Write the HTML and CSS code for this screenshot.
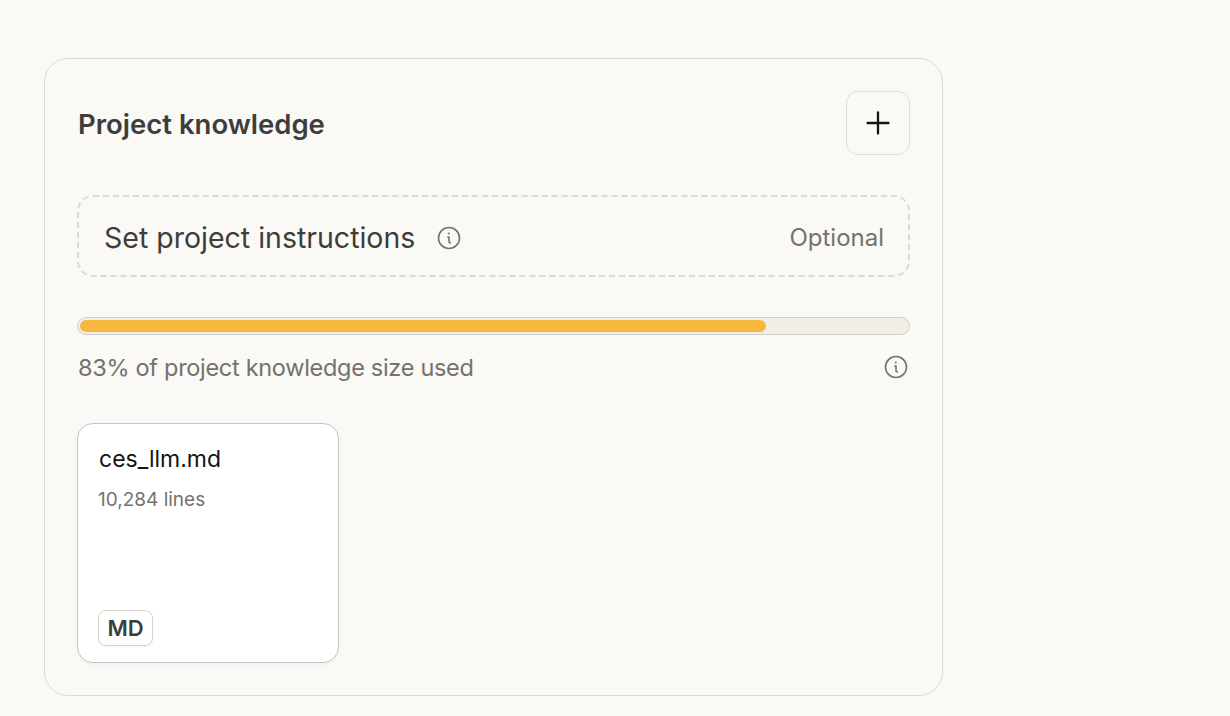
FILE: index.html
```html
<!DOCTYPE html>
<html lang="en">
<head>
<meta charset="utf-8">
<title>Project knowledge</title>
<link rel="stylesheet" href="styles.css">
</head>
<body>
<div class="top-fade"></div>
<section class="panel">
  <header class="panel-head">
    <h2 class="panel-title">Project knowledge</h2>
    <button class="add-btn" aria-label="Add">
      <svg class="plus" viewBox="0 0 24 24" width="24" height="24"><path d="M12 1.500v21M1.500 12h21" /></svg>
    </button>
  </header>
  <div class="instructions">
    <div class="instr-left">
      <span class="instr-label">Set project instructions</span>
      <svg class="info" viewBox="0 0 24 24" width="24" height="24"><circle cx="12" cy="12" r="10.500"/><path d="M10.800 11h1.200v4.500c0 1 .5 1.500 1.500 1.500"/><circle class="dot" cx="11.800" cy="7.500" r="1"/></svg>
    </div>
    <span class="optional">Optional</span>
  </div>
  <div class="meter"><div class="meter-fill" style="width:83%"></div></div>
  <div class="usage">
    <span>83% of project knowledge size used</span>
    <svg class="info" viewBox="0 0 24 24" width="24" height="24"><circle cx="12" cy="12" r="10.500"/><path d="M10.800 11h1.200v4.500c0 1 .5 1.500 1.500 1.500"/><circle class="dot" cx="11.800" cy="7.500" r="1"/></svg>
  </div>
  <article class="file">
    <div class="file-name">ces_llm.md</div>
    <div class="file-meta">10,284 lines</div>
    <span class="file-tag">MD</span>
  </article>
</section>
</body>
</html>
```
FILE: styles.css
```css
* { box-sizing: border-box; }
html, body { height: 100%; }
body {
  margin: 0;
  background: #faf9f5;
  font-family: Inter, "Noto Sans", sans-serif;
  overflow: hidden;
  position: relative;
}
.top-fade {
  position: absolute;
  top: 10px;
  left: 0;
  width: 995px;
  height: 36px;
  background: linear-gradient(#fbfaf6, #faf9f5);
}
.panel {
  position: relative;
  margin: 58px 0 0 44px;
  width: 899px;
  height: 638px;
  padding: 32px;
  border: 1px solid #dcdad3;
  border-radius: 24px;
  display: flex;
  flex-direction: column;
}
.panel-head {
  display: flex;
  align-items: center;
  justify-content: space-between;
  height: 64px;
}
.panel-title {
  margin: 0;
  padding: 2px 0 0 1px;
  font-size: 27.500px;
  font-weight: 600;
  color: #3d3d3a;
}
.add-btn {
  width: 64px;
  height: 64px;
  padding: 0;
  background: transparent;
  border: 1px solid #dfddd6;
  border-radius: 12px;
  display: flex;
  align-items: center;
  justify-content: center;
}
.plus { fill: none; stroke: #141413; stroke-width: 2.300; stroke-linecap: round; }
.instructions {
  margin-top: 40px;
  height: 82px;
  padding: 3px 24px 0 25px;
  border: 2px dashed #dcdad3;
  border-radius: 16px;
  display: flex;
  align-items: center;
  justify-content: space-between;
}
.instr-left { display: flex; align-items: center; gap: 22px; }
.instr-label { font-size: 28.500px; color: #3d3d3a; }
.optional { font-size: 24px; color: #73726c; }
.info { fill: none; stroke: #73726c; stroke-width: 1.600; stroke-linecap: round; stroke-linejoin: round; }
.info .dot { fill: #73726c; stroke: none; }
.meter {
  margin-top: 40px;
  height: 18px;
  padding: 2px;
  border: 1px solid #d0cec6;
  border-radius: 9px;
  background: #f0eee6;
}
.meter-fill { height: 100%; border-radius: 6px; background: #f6b93f; }
.usage {
  margin-top: 15px;
  height: 34px;
  display: flex;
  align-items: center;
  justify-content: space-between;
  font-size: 23.500px;
  letter-spacing: -0.300px;
  color: #73726c;
  padding: 0 2px 0 1px;
}
.file {
  margin-top: 39px;
  width: 262px;
  height: 240px;
  padding: 18px 20px 16px;
  background: #fff;
  border: 1px solid #c6c4c6;
  border-radius: 16px;
  box-shadow: 0 2px 4px rgba(0,0,0,.04);
  display: flex;
  flex-direction: column;
  align-items: flex-start;
}
.file-name { padding-left: 1px; font-size: 23px; line-height: 34px; color: #141413; }
.file-meta { margin-top: 11px; font-size: 19px; line-height: 26px; color: #73726c; }
.file-tag {
  margin-top: auto;
  width: 55px;
  height: 36px;
  border: 1px solid #d6d4cd;
  border-radius: 8px;
  box-shadow: 0 1px 2px rgba(0,0,0,.05);
  display: flex;
  align-items: center;
  justify-content: center;
  font-size: 22px;
  font-weight: 600;
  color: #3d3d3a;
}
```
